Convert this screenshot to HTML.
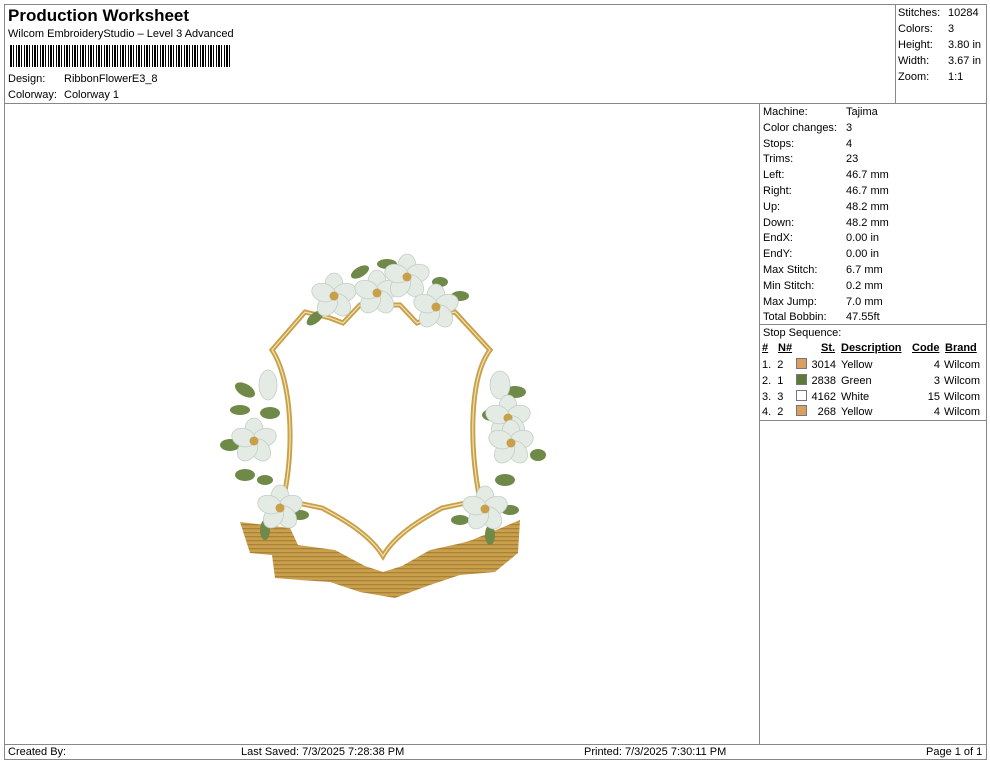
<!DOCTYPE html>
<html><head><meta charset="utf-8"><style>
body{margin:0;width:990px;height:762px;background:#fff;font-family:"Liberation Sans",Arial,sans-serif;font-size:11px;color:#000;position:relative;overflow:hidden}
.a{position:absolute;white-space:nowrap}
.l{position:absolute;background:#888}
.sw{display:inline-block;width:9px;height:9px;vertical-align:-1px;border:1px solid #777}
</style></head><body>
<div class="l" style="left:4px;top:4px;width:983px;height:1px"></div>
<div class="l" style="left:4px;top:4px;width:1px;height:756px"></div>
<div class="l" style="left:986px;top:4px;width:1px;height:756px"></div>
<div class="l" style="left:4px;top:759px;width:983px;height:1px"></div>
<div class="l" style="left:4px;top:103px;width:983px;height:1px"></div>
<div class="l" style="left:895px;top:4px;width:1px;height:99px"></div>
<div class="l" style="left:759px;top:103px;width:1px;height:641px"></div>
<div class="l" style="left:759px;top:324px;width:228px;height:1px"></div>
<div class="l" style="left:759px;top:420px;width:228px;height:1px"></div>
<div class="l" style="left:4px;top:744px;width:983px;height:1px"></div>

<div class="a" style="left:8px;top:6px;font-size:17px;font-weight:bold">Production Worksheet</div>
<div class="a" style="left:8px;top:28px">Wilcom EmbroideryStudio – Level 3 Advanced</div>
<div class="a" style="left:10px;top:45px;width:222px;height:22px;background:repeating-linear-gradient(90deg,#000 0 2px,#fff 2px 3px,#000 3px 4px,#fff 4px 6px,#000 6px 7px,#fff 7px 8px)"></div>
<div class="a" style="left:8px;top:73px">Design:</div><div class="a" style="left:64px;top:73px">RibbonFlowerE3_8</div>
<div class="a" style="left:8px;top:89px">Colorway:</div><div class="a" style="left:64px;top:89px">Colorway 1</div>

<div class="a" style="left:898px;top:5px;line-height:16px">Stitches:<br>Colors:<br>Height:<br>Width:<br>Zoom:</div>
<div class="a" style="left:948px;top:5px;line-height:16px">10284<br>3<br>3.80 in<br>3.67 in<br>1:1</div>

<div class="a" style="left:763px;top:105px;line-height:15.8px">Machine:<br>Color changes:<br>Stops:<br>Trims:<br>Left:<br>Right:<br>Up:<br>Down:<br>EndX:<br>EndY:<br>Max Stitch:<br>Min Stitch:<br>Max Jump:<br>Total Bobbin:<br>Stop Sequence:</div>
<div class="a" style="left:846px;top:105px;line-height:15.8px">Tajima<br>3<br>4<br>23<br>46.7 mm<br>46.7 mm<br>48.2 mm<br>48.2 mm<br>0.00 in<br>0.00 in<br>6.7 mm<br>0.2 mm<br>7.0 mm<br>47.55ft</div>
<div class="a" style="left:762px;top:342px;font-weight:bold;text-decoration:underline">#</div>
<div class="a" style="left:778px;top:342px;font-weight:bold;text-decoration:underline">N#</div>
<div class="a" style="left:821px;top:342px;font-weight:bold;text-decoration:underline">St.</div>
<div class="a" style="left:841px;top:342px;font-weight:bold;text-decoration:underline">Description</div>
<div class="a" style="left:912px;top:342px;font-weight:bold;text-decoration:underline">Code</div>
<div class="a" style="left:945px;top:342px;font-weight:bold;text-decoration:underline">Brand</div>
<div class="a" style="left:762px;top:358px;line-height:15.8px">1.&nbsp; 2<br>2.&nbsp; 1<br>3.&nbsp; 3<br>4.&nbsp; 2</div>
<div class="a" style="left:796px;top:358px;line-height:15.8px"><span class="sw" style="background:#d8a060"></span><br><span class="sw" style="background:#5e7a3a"></span><br><span class="sw" style="background:#fff"></span><br><span class="sw" style="background:#d8a060"></span></div>
<div class="a" style="left:808px;top:358px;line-height:15.8px;width:28px;text-align:right">3014<br>2838<br>4162<br>268</div>
<div class="a" style="left:841px;top:358px;line-height:15.8px">Yellow<br>Green<br>White<br>Yellow</div>
<div class="a" style="left:910px;top:358px;line-height:15.8px;width:30px;text-align:right">4<br>3<br>15<br>4</div>
<div class="a" style="left:944px;top:358px;line-height:15.8px">Wilcom<br>Wilcom<br>Wilcom<br>Wilcom</div>

<div class="a" style="left:8px;top:746px">Created By:</div>
<div class="a" style="left:241px;top:746px">Last Saved: 7/3/2025 7:28:38 PM</div>
<div class="a" style="left:584px;top:746px">Printed: 7/3/2025 7:30:11 PM</div>
<div class="a" style="left:926px;top:746px">Page 1 of 1</div>

<svg class="a" style="left:0;top:0" width="760" height="740">
<defs>
<pattern id="st" width="4" height="4" patternUnits="userSpaceOnUse"><rect width="4" height="4" fill="#caa04c"/><rect y="0" width="4" height="1.3" fill="#a9823a"/></pattern>
<g id="fl"><g fill="#e3ebe4" stroke="#c2cfc6" stroke-width="0.8">
<ellipse cx="0" cy="-11" rx="9" ry="12"/><ellipse cx="0" cy="-11" rx="9" ry="12" transform="rotate(72)"/><ellipse cx="0" cy="-11" rx="9" ry="12" transform="rotate(144)"/><ellipse cx="0" cy="-11" rx="9" ry="12" transform="rotate(216)"/><ellipse cx="0" cy="-11" rx="9" ry="12" transform="rotate(288)"/></g>
<circle r="4.5" fill="#c9a04a"/></g>
</defs>
<path d="M240,522 L290,528 L298,545 L335,550 L365,566 L383,572 L402,566 L430,550 L462,543 L472,540 L520,520 L518,553 L495,572 L460,575 L430,585 L395,598 L360,592 L330,582 L300,580 L275,578 L272,555 L250,553 Z" fill="url(#st)"/>
<path d="M272,350 L305,312 L330,318 L343,323 L360,305 L400,305 L417,323 L430,318 L455,312 L490,350 C468,380 470,450 480,500 L442,508 C420,520 395,535 383,556 C370,535 345,520 322,508 L283,500 C295,450 292,380 272,350 Z" fill="none" stroke="#c9a04a" stroke-width="5"/>
<path d="M272,350 L305,312 L330,318 L343,323 L360,305 L400,305 L417,323 L430,318 L455,312 L490,350 C468,380 470,450 480,500 L442,508 C420,520 395,535 383,556 C370,535 345,520 322,508 L283,500 C295,450 292,380 272,350 Z" fill="none" stroke="#f3e2b0" stroke-width="1.2"/>
<g fill="#6f8a48">
<ellipse cx="315" cy="318" rx="10" ry="5" transform="rotate(-40 315 318)"/><ellipse cx="360" cy="272" rx="10" ry="5" transform="rotate(-30 360 272)"/><ellipse cx="387" cy="264" rx="10" ry="5"/><ellipse cx="440" cy="282" rx="8" ry="5"/><ellipse cx="460" cy="296" rx="9" ry="5"/>
<ellipse cx="245" cy="390" rx="11" ry="6" transform="rotate(30 245 390)"/><ellipse cx="240" cy="410" rx="10" ry="5"/><ellipse cx="270" cy="413" rx="10" ry="6"/><ellipse cx="230" cy="445" rx="10" ry="6"/><ellipse cx="245" cy="475" rx="10" ry="6"/><ellipse cx="265" cy="480" rx="8" ry="5"/><ellipse cx="300" cy="515" rx="9" ry="5"/><ellipse cx="265" cy="530" rx="5" ry="10"/>
<ellipse cx="515" cy="392" rx="11" ry="6"/><ellipse cx="492" cy="415" rx="10" ry="6"/><ellipse cx="538" cy="455" rx="8" ry="6"/><ellipse cx="505" cy="480" rx="10" ry="6"/><ellipse cx="460" cy="520" rx="9" ry="5"/><ellipse cx="510" cy="510" rx="9" ry="5"/><ellipse cx="490" cy="535" rx="5" ry="10"/>
</g>
<g fill="#e3ebe4" stroke="#c2cfc6" stroke-width="0.8"><ellipse cx="268" cy="385" rx="9" ry="15"/><ellipse cx="500" cy="385" rx="10" ry="14"/></g>
<use href="#fl" x="334" y="296"/><use href="#fl" x="377" y="293"/><use href="#fl" x="407" y="277"/><use href="#fl" x="436" y="307"/>
<use href="#fl" x="254" y="441"/><use href="#fl" x="280" y="508"/>
<use href="#fl" x="508" y="418"/><use href="#fl" x="511" y="443"/><use href="#fl" x="485" y="509"/>
</svg>
</body></html>
